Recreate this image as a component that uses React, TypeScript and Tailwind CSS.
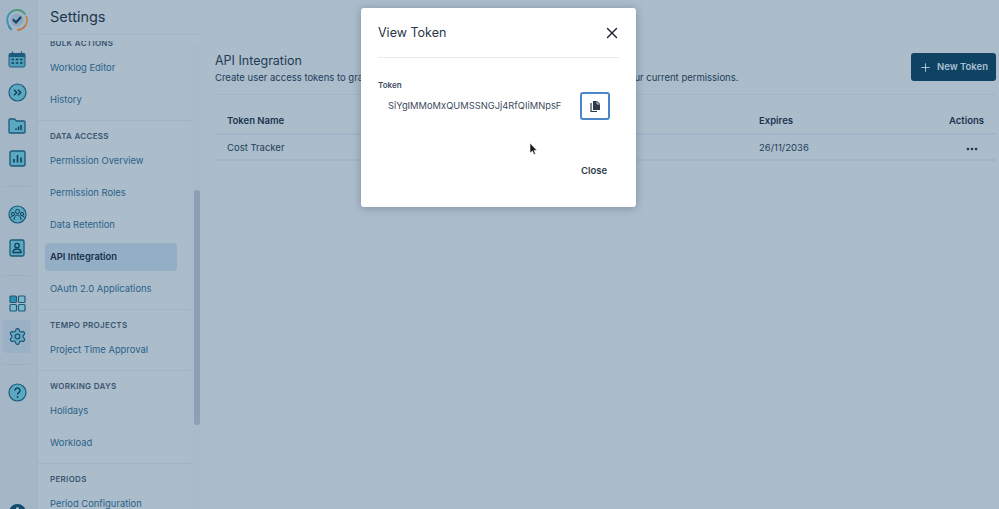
import { MoreHorizontal, Plus, Settings, X } from "lucide-react";

type NavItem = { label: string; active?: boolean };
type NavSection = { title: string; items: NavItem[] };

const sections: NavSection[] = [
  { title: "BULK ACTIONS", items: [{ label: "Worklog Editor" }, { label: "History" }] },
  {
    title: "DATA ACCESS",
    items: [
      { label: "Permission Overview" },
      { label: "Permission Roles" },
      { label: "Data Retention" },
      { label: "API Integration", active: true },
      { label: "OAuth 2.0 Applications" },
    ],
  },
  { title: "TEMPO PROJECTS", items: [{ label: "Project Time Approval" }] },
  { title: "WORKING DAYS", items: [{ label: "Holidays" }, { label: "Workload" }] },
  { title: "PERIODS", items: [{ label: "Period Configuration" }] },
];

function RailIcon({ children }: { children: React.ReactNode }) {
  return <div className="flex h-[33px] w-full items-center justify-center">{children}</div>;
}

function Logo() {
  return (
    <svg width="24" height="24" viewBox="0 0 24 24" fill="none" strokeWidth="2" strokeLinecap="round">
      <path d="M3.5 17A10 10 0 0 1 6 4" stroke="#3f94b5" />
      <path d="M6 4A10 10 0 0 1 20 6" stroke="#4f9a7d" />
      <path d="M21.5 9A10 10 0 0 1 20 18" stroke="#b98a4f" />
      <path d="M20 18A10 10 0 0 1 13 22" stroke="#b9794f" />
      <path d="M6 21A10 10 0 0 1 4 18.5" stroke="#2f86b0" />
      <circle cx="12" cy="12" r="6.5" fill="#8ea8bd" />
      <path d="M8.5 12l2.5 2.5 4.5-5" stroke="#123f66" strokeWidth="2.2" />
    </svg>
  );
}

function Rail() {
  const stroke = "#1d5a7c";
  return (
    <div className="flex h-full w-[37px] shrink-0 flex-col bg-[#a5b7c7] pr-[3px] pt-[3px]">
      <div className="flex h-[34px] items-center justify-center">
        <Logo />
      </div>
      <div className="mt-[6px]" />
      <RailIcon>
        <svg width="18" height="17" viewBox="0 0 18 17" fill="none">
          <rect x="1" y="2.5" width="16" height="13.5" rx="1.5" fill="#4f9fba" stroke={stroke} />
          <rect x="1" y="2.5" width="16" height="3.5" fill={stroke} />
          <path d="M4.5 .5v3M13.5 .5v3" stroke={stroke} strokeWidth="1.3" />
          <path d="M3.5 8.5h2.5M7.8 8.5h2.5M12 8.5h2.5M3.5 12h2.5M7.8 12h2.5M12 12h2.5" stroke="#123f5c" strokeWidth="1.6" />
        </svg>
      </RailIcon>
      <RailIcon>
        <svg width="19" height="19" viewBox="0 0 19 19" fill="none">
          <circle cx="9.5" cy="9.5" r="8.5" fill="#5aa9c1" stroke={stroke} strokeWidth="1.2" />
          <path d="M6 6.8l2.7 2.7L6 12.2M10 6.8l2.7 2.7-2.7 2.7" stroke="#123f5c" strokeWidth="1.4" />
        </svg>
      </RailIcon>
      <RailIcon>
        <svg width="18" height="16" viewBox="0 0 18 16" fill="none">
          <path d="M1 2a1 1 0 0 1 1-1h4.5l2 2H16a1 1 0 0 1 1 1v10a1 1 0 0 1-1 1H2a1 1 0 0 1-1-1z" fill="#5aa9c1" stroke={stroke} strokeWidth="1.3" />
          <path d="M8 12v-1.5M10.5 12V8.5M13 12V7" stroke="#123f5c" strokeWidth="1.5" />
        </svg>
      </RailIcon>
      <RailIcon>
        <svg width="17" height="17" viewBox="0 0 17 17" fill="none">
          <rect x="1" y="1" width="15" height="15" rx="2" fill="#5aa9c1" stroke={stroke} strokeWidth="1.4" />
          <path d="M5 12.5V9M8.5 12.5V5M12 12.5V7.5" stroke="#123f5c" strokeWidth="1.6" />
        </svg>
      </RailIcon>
      <div className="mx-[3px] my-[11px] h-px bg-[#9db0c1]" />
      <RailIcon>
        <svg width="19" height="19" viewBox="0 0 19 19" fill="none">
          <circle cx="9.5" cy="9.5" r="8.5" fill="#5aa9c1" stroke={stroke} strokeWidth="1.2" />
          <circle cx="9.5" cy="6.5" r="2" stroke="#123f5c" />
          <circle cx="5" cy="9" r="1.6" stroke="#123f5c" />
          <circle cx="14" cy="9" r="1.6" stroke="#123f5c" />
          <path d="M6 15c0-3 1.5-5 3.5-5s3.5 2 3.5 5M2.5 13c.4-1.2 1.2-2 2.5-2M16.5 13c-.4-1.2-1.2-2-2.5-2" stroke="#123f5c" />
        </svg>
      </RailIcon>
      <RailIcon>
        <svg width="16" height="18" viewBox="0 0 16 18" fill="none">
          <rect x="1" y="1" width="14" height="16" rx="1.5" fill="#5aa9c1" stroke={stroke} strokeWidth="1.3" />
          <circle cx="8" cy="6.5" r="2.2" stroke="#123f5c" strokeWidth="1.3" />
          <path d="M4 13.5c0-2.3 1.7-3.5 4-3.5s4 1.2 4 3.5z" stroke="#123f5c" strokeWidth="1.3" />
        </svg>
      </RailIcon>
      <div className="mx-[3px] my-[11px] h-px bg-[#9db0c1]" />
      <RailIcon>
        <svg width="17" height="17" viewBox="0 0 17 17" fill="none" stroke={stroke} strokeWidth="1.2">
          <rect x="1" y="1" width="6.5" height="6.5" rx="1" fill="#2f8fb5" />
          <rect x="9.5" y="1" width="6.5" height="6.5" rx="1" fill="#7fb8c9" />
          <rect x="1" y="9.5" width="6.5" height="6.5" rx="1" fill="#7fb8c9" />
          <rect x="9.5" y="9.5" width="6.5" height="6.5" rx="1" fill="#7fb8c9" />
        </svg>
      </RailIcon>
      <div className="mx-[3px] flex h-[33px] items-center justify-center rounded bg-[#9ab0c4]">
        <Settings size={19} strokeWidth={1.4} color="#174f72" fill="#6aa9c0" />
      </div>
      <div className="mx-[3px] my-[11px] h-px bg-[#9db0c1]" />
      <RailIcon>
        <svg width="19" height="19" viewBox="0 0 19 19" fill="none">
          <circle cx="9.5" cy="9.5" r="8.5" fill="#5aa9c1" stroke={stroke} strokeWidth="1.2" />
          <path d="M7 7.5a2.5 2.5 0 1 1 3.8 2.1c-.9.6-1.3 1-1.3 2" stroke="#123f5c" strokeWidth="1.4" />
          <circle cx="9.5" cy="14" r=".9" fill="#123f5c" />
        </svg>
      </RailIcon>
      <div className="mt-auto flex justify-center">
        <div className="mb-[-12px] flex h-[17px] w-[17px] items-start justify-center rounded-full bg-[#134a6e] pt-[3px]">
          <div className="h-[5px] w-[3px] rounded-sm bg-[#a9bccb]" />
        </div>
      </div>
    </div>
  );
}

function Sidebar() {
  return (
    <div className="relative h-full w-[164px] shrink-0 overflow-hidden border-l border-[#a0b3c4]">
      <div className="flex h-[35px] items-center border-b border-[#a3b6c6] pl-[12px] text-[14.5px] text-[#1f3650]">
        Settings
      </div>
      <div className="mt-[6px] h-[468px] overflow-hidden">
        <div className="mt-[-13px] w-[153px]">
          {sections.map((s) => (
            <div key={s.title} className="border-b border-[#9fb3c5] pb-[4px] pt-[9px] last:border-b-0">
              <div className="pl-[12px] text-[8px] font-semibold leading-[12px] tracking-[0.3px] text-[#39566f]">
                {s.title}
              </div>
              <div className="mt-[3px] flex flex-col">
                {s.items.map((item) => (
                  <div
                    key={item.label}
                    className={
                      item.active
                        ? "my-[2px] ml-[7px] mr-[14px] flex h-[28px] items-center rounded-sm bg-[#94aec5] pl-[5px] text-[9.4px] font-semibold text-[#17304b]"
                        : "flex h-[32px] items-center pl-[12px] text-[9.4px] text-[#2a6288]"
                    }
                  >
                    {item.label}
                  </div>
                ))}
              </div>
            </div>
          ))}
        </div>
      </div>
      <div className="absolute right-0 top-[43px] bottom-0 w-[10px] bg-[#a9bbcb]">
        <div className="absolute left-[3px] top-[147px] h-[235px] w-[6px] rounded-full bg-[#8ba0b2]" />
      </div>
    </div>
  );
}

function Main() {
  return (
    <div className="min-w-0 flex-1 pl-[14px] pr-[3px] pt-[53px]">
      <div className="flex h-[42px] items-start justify-between border-b border-[#a1b5c6]">
        <div>
          <div className="text-[12.5px] leading-[15px] text-[#1f3b56]">API Integration</div>
          <div className="mt-[3px] whitespace-nowrap text-[9.5px] leading-[14px] text-[#213e58]">
            Create user access tokens to grant third-party applications access to Tempo API based on your current permissions.
          </div>
        </div>
        <div className="flex h-[28px] w-[85px] items-center justify-center gap-[5px] rounded-[3px] bg-[#0f4364] text-[9.5px] font-semibold text-[#a9c0d2]">
          <Plus size={13} strokeWidth={1.6} color="#c5d5e0" />
          New Token
        </div>
      </div>
      <div className="flex h-[40px] items-center justify-between border-b-2 border-[#9fb5c9] pl-[12px] pr-[12px] pt-[15px] text-[9.5px] font-semibold text-[#1c3550]">
        <div>Token Name</div>
        <div className="flex">
          <div className="w-[188px]">Expires</div>
          <div className="w-[37px] text-right">Actions</div>
        </div>
      </div>
      <div className="flex h-[26px] items-center justify-between border-b-2 border-[#a1b5c6] pl-[12px] pr-[12px] pt-[3px] text-[9.5px] text-[#233f59]">
        <div>Cost Tracker</div>
        <div className="flex items-center">
          <div className="w-[188px]">26/11/2036</div>
          <div className="flex w-[37px] justify-end pr-[5px]">
            <MoreHorizontal size={14} strokeWidth={2.5} color="#1c3550" />
          </div>
        </div>
      </div>
    </div>
  );
}

function TokenModal() {
  return (
    <div className="absolute left-[361px] top-[8px] h-[199px] w-[275px] rounded-[3px] bg-white px-[17px] shadow-[0_1px_8px_rgba(40,60,85,0.35)]">
      <div className="flex h-[50px] items-center justify-between border-b border-[#e6ebef] pt-[1px]">
        <div className="text-[12.5px] text-[#2a3547]">View Token</div>
        <X size={18} strokeWidth={1.9} color="#1e2733" className="mr-[-2px]" />
      </div>
      <div className="mt-[22px] text-[8px] font-semibold leading-[10px] text-[#3d4d60]">Token</div>
      <div className="mt-[2px] flex items-center">
        <div className="w-[203px] whitespace-nowrap pl-[10px] text-[9.35px] text-[#3b4a5c]">
          SiYgIMMoMxQUMSSNGJj4RfQIiMNpsF
        </div>
        <div className="ml-[-1px] flex h-[28px] w-[30px] items-center justify-center rounded-[3px] border-2 border-[#4a86c8]">
          <svg width="11" height="13" viewBox="0 0 11 13" fill="none">
            <path d="M1 3v8.5h6" stroke="#2c3a4b" strokeWidth="1.2" />
            <path d="M3 1h4.2L10 3.8V10H3z" fill="#2c3a4b" />
            <path d="M7 1.4v2.6h2.6" stroke="#fff" strokeWidth=".7" />
          </svg>
        </div>
      </div>
      <div className="mt-[45px] flex justify-end pr-[12px] text-[9.5px] font-semibold leading-[12px] text-[#2f3c4c]">
        Close
      </div>
      <svg className="absolute left-[168px] top-[134px]" width="9" height="14" viewBox="0 0 9 14">
        <path d="M1 1v10l2.4-2 1.6 3.5 1.5-.7L5 8.5h3z" fill="#1a1a1a" stroke="#fff" strokeWidth=".6" />
      </svg>
    </div>
  );
}

export default function App() {
  return (
    <div
      className="relative flex h-[509px] w-[999px] overflow-hidden bg-[#abbccb]"
      style={{ fontFamily: "Inter, 'Liberation Sans', sans-serif" }}
    >
      <Rail />
      <Sidebar />
      <Main />
      <TokenModal />
    </div>
  );
}
